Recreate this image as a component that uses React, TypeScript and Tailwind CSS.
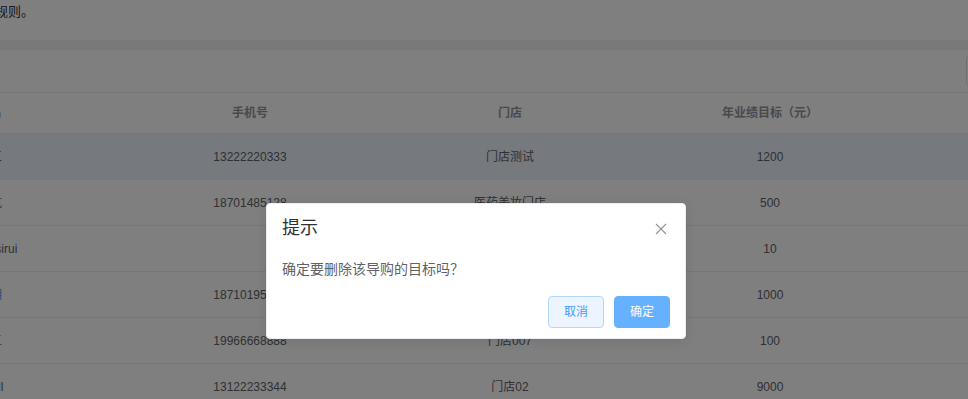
const rows = [
  { name: "张三", phone: "13222220333", store: "门店测试", target: "1200", active: true },
  { name: "李杭", phone: "18701485128", store: "医药美妆门店", target: "500" },
  { name: "zhangsirui", phone: "", store: "", target: "10" },
  { name: "刘明", phone: "18710195566", store: "门店01", target: "1000", link: true },
  { name: "王五", phone: "19966668888", store: "门店007", target: "100" },
  { name: "Cyrill", phone: "13122233344", store: "门店02", target: "9000" },
];

const font = "font-['Liberation_Sans','Noto_Sans_CJK_SC',sans-serif]";

function CloseIcon() {
  return (
    <svg width="12" height="12" viewBox="0 0 12 12" className="block">
      <path d="M1 1 L11 11 M11 1 L1 11" stroke="#909399" strokeWidth="1.1" fill="none" />
    </svg>
  );
}

export default function App() {
  return (
    <div className={`relative h-[399px] w-[968px] overflow-hidden bg-white ${font}`}>
      {/* page under the mask */}
      <div className="ml-[-5px] h-[40px] text-[13px] leading-[24px] text-[#303133]">规则。</div>
      <div className="h-[10px] bg-[#f0f2f5]" />
      <div className="flex h-[43px] items-center justify-end border-b border-[#ebeef5]">
        <div className="mr-[-30px] h-[32px] w-[32px] rounded-[4px] border border-[#dcdfe6]" />
      </div>

      <div className="overflow-hidden">
        <div className="ml-[-140px] w-[1300px]">
          <div className="flex h-[41px] items-center border-b border-[#ebeef5] text-[12px] font-bold text-[#909399]">
            <div className="w-[260px] text-center">姓名</div>
            <div className="w-[260px] text-center">手机号</div>
            <div className="w-[260px] text-center">门店</div>
            <div className="w-[260px] text-center">年业绩目标（元）</div>
            <div className="w-[260px] text-center">操作</div>
          </div>
          {rows.map((r) => (
            <div
              key={r.phone + r.name}
              className={`flex h-[46px] items-center border-b border-[#ebeef5] text-[12px] text-[#606266] ${r.active ? "bg-[#ecf5ff]" : ""}`}
            >
              <div className={`w-[260px] text-center ${r.link ? "text-[#409eff]" : ""}`}>{r.name}</div>
              <div className="w-[260px] text-center">{r.phone}</div>
              <div className="w-[260px] text-center">{r.store}</div>
              <div className="w-[260px] text-center">{r.target}</div>
              <div className="w-[260px] text-center">编辑</div>
            </div>
          ))}
        </div>
      </div>

      {/* mask */}
      <div className="absolute inset-0 bg-black/50" />

      {/* message box */}
      <div className="absolute left-[266px] top-[203px] w-[420px] rounded-[4px] border border-[#ebeef5] bg-white pb-[10px] shadow-[0_2px_12px_rgba(0,0,0,0.1)]">
        <div className="relative px-[15px] pb-[10px] pt-[15px]">
          <div className="text-[18px] leading-[18px] text-[#303133]">提示</div>
          <button className="absolute right-[18px] top-[19px]">
            <CloseIcon />
          </button>
        </div>
        <div className="px-[15px] py-[10px] text-[14px] leading-[24px] text-[#606266]">
          确定要删除该导购的目标吗？
        </div>
        <div className="flex justify-end gap-[10px] px-[15px] pt-[5px]">
          <button className="h-[32px] w-[56px] rounded-[4px] border border-[#b3d8ff] bg-[#ecf5ff] text-[12px] text-[#409eff]">
            取消
          </button>
          <button className="h-[32px] w-[56px] rounded-[4px] border border-[#66b1ff] bg-[#66b1ff] text-[12px] text-white">
            确定
          </button>
        </div>
      </div>
    </div>
  );
}
